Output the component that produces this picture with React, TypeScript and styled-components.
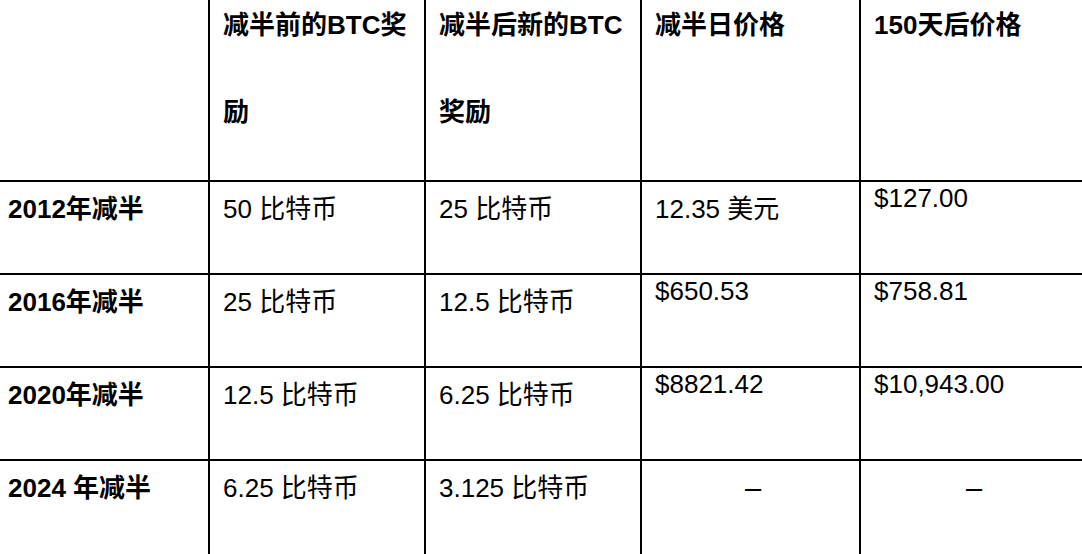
import React from "react";
import styled, { createGlobalStyle } from "styled-components";

const Global = createGlobalStyle`
  html, body {
    margin: 0;
    padding: 0;
    background: #ffffff;
    overflow: hidden;
  }
  body {
    font-family: "Liberation Sans", "Noto Sans CJK SC", Arial, sans-serif;
    color: #000000;
  }
`;

const Table = styled.table`
  width: 1082px;
  border-collapse: collapse;
  table-layout: fixed;
`;

const Col = styled.col<{ $w: number }>`
  width: ${(p) => p.$w}px;
`;

const HeadRow = styled.tr`
  height: 181px;
`;

const BodyRow = styled.tr<{ $last?: boolean }>`
  height: ${(p) => (p.$last ? 110 : 93)}px;
`;

const Cell = styled.td<{ $first?: boolean; $center?: boolean; $raised?: boolean; $pl?: number }>`
  border: 2px solid #000;
  border-top: ${(p) => (p.$first ? "none" : "2px solid #000")};
  vertical-align: top;
  padding: ${(p) => (p.$raised ? 1 : 12)}px 8px 0 ${(p) => p.$pl ?? 13}px;
  font-size: 26px;
  line-height: 30px;
  text-align: ${(p) => (p.$center ? "center" : "left")};
  &:first-child {
    border-left: none;
  }
  &:last-child {
    border-right: none;
  }
`;

const HeadCell = styled.th<{ $pl?: number }>`
  border: 2px solid #000;
  border-top: none;
  vertical-align: top;
  text-align: left;
  padding: 0 8px 0 ${(p) => p.$pl ?? 13}px;
  font-size: 26px;
  font-weight: 700;
  &:first-child {
    border-left: none;
  }
  &:last-child {
    border-right: none;
  }
`;

const HeadText = styled.div`
  line-height: 87px;
  margin-top: -18px;
`;

const Label = styled.span`
  font-weight: 700;
`;

const Dash = styled.span`
  font-size: 29px;
  line-height: 30px;
`;

type Row = {
  label: string;
  before: string;
  after: string;
  price: string;
  later: string;
  priceRaised: boolean;
  laterRaised: boolean;
  dash?: boolean;
};

const rows: Row[] = [
  { label: "2012年减半", before: "50 比特币", after: "25 比特币", price: "12.35 美元", later: "$127.00", priceRaised: false, laterRaised: true },
  { label: "2016年减半", before: "25 比特币", after: "12.5 比特币", price: "$650.53", later: "$758.81", priceRaised: true, laterRaised: true },
  { label: "2020年减半", before: "12.5 比特币", after: "6.25 比特币", price: "$8821.42", later: "$10,943.00", priceRaised: true, laterRaised: true },
  { label: "2024 年减半", before: "6.25 比特币", after: "3.125 比特币", price: "–", later: "–", priceRaised: false, laterRaised: false, dash: true },
];

export default function App() {
  return (
    <>
      <Global />
      <Table>
        <colgroup>
          <Col $w={209} />
          <Col $w={216} />
          <Col $w={216} />
          <Col $w={219} />
          <Col $w={222} />
        </colgroup>
        <thead>
          <HeadRow>
            <HeadCell $pl={8}></HeadCell>
            <HeadCell>
              <HeadText>减半前的BTC奖励</HeadText>
            </HeadCell>
            <HeadCell>
              <HeadText>减半后新的BTC奖励</HeadText>
            </HeadCell>
            <HeadCell>
              <HeadText>减半日价格</HeadText>
            </HeadCell>
            <HeadCell>
              <HeadText>150天后价格</HeadText>
            </HeadCell>
          </HeadRow>
        </thead>
        <tbody>
          {rows.map((r, i) => (
            <BodyRow key={r.label} $last={i === rows.length - 1}>
              <Cell $first={i === 0} $pl={8}>
                <Label>{r.label}</Label>
              </Cell>
              <Cell $first={i === 0}>{r.before}</Cell>
              <Cell $first={i === 0}>{r.after}</Cell>
              <Cell $first={i === 0} $raised={r.priceRaised} $center={r.dash}>
                {r.dash ? <Dash>{r.price}</Dash> : r.price}
              </Cell>
              <Cell $first={i === 0} $raised={r.laterRaised} $center={r.dash}>
                {r.dash ? <Dash>{r.later}</Dash> : r.later}
              </Cell>
            </BodyRow>
          ))}
        </tbody>
      </Table>
    </>
  );
}
